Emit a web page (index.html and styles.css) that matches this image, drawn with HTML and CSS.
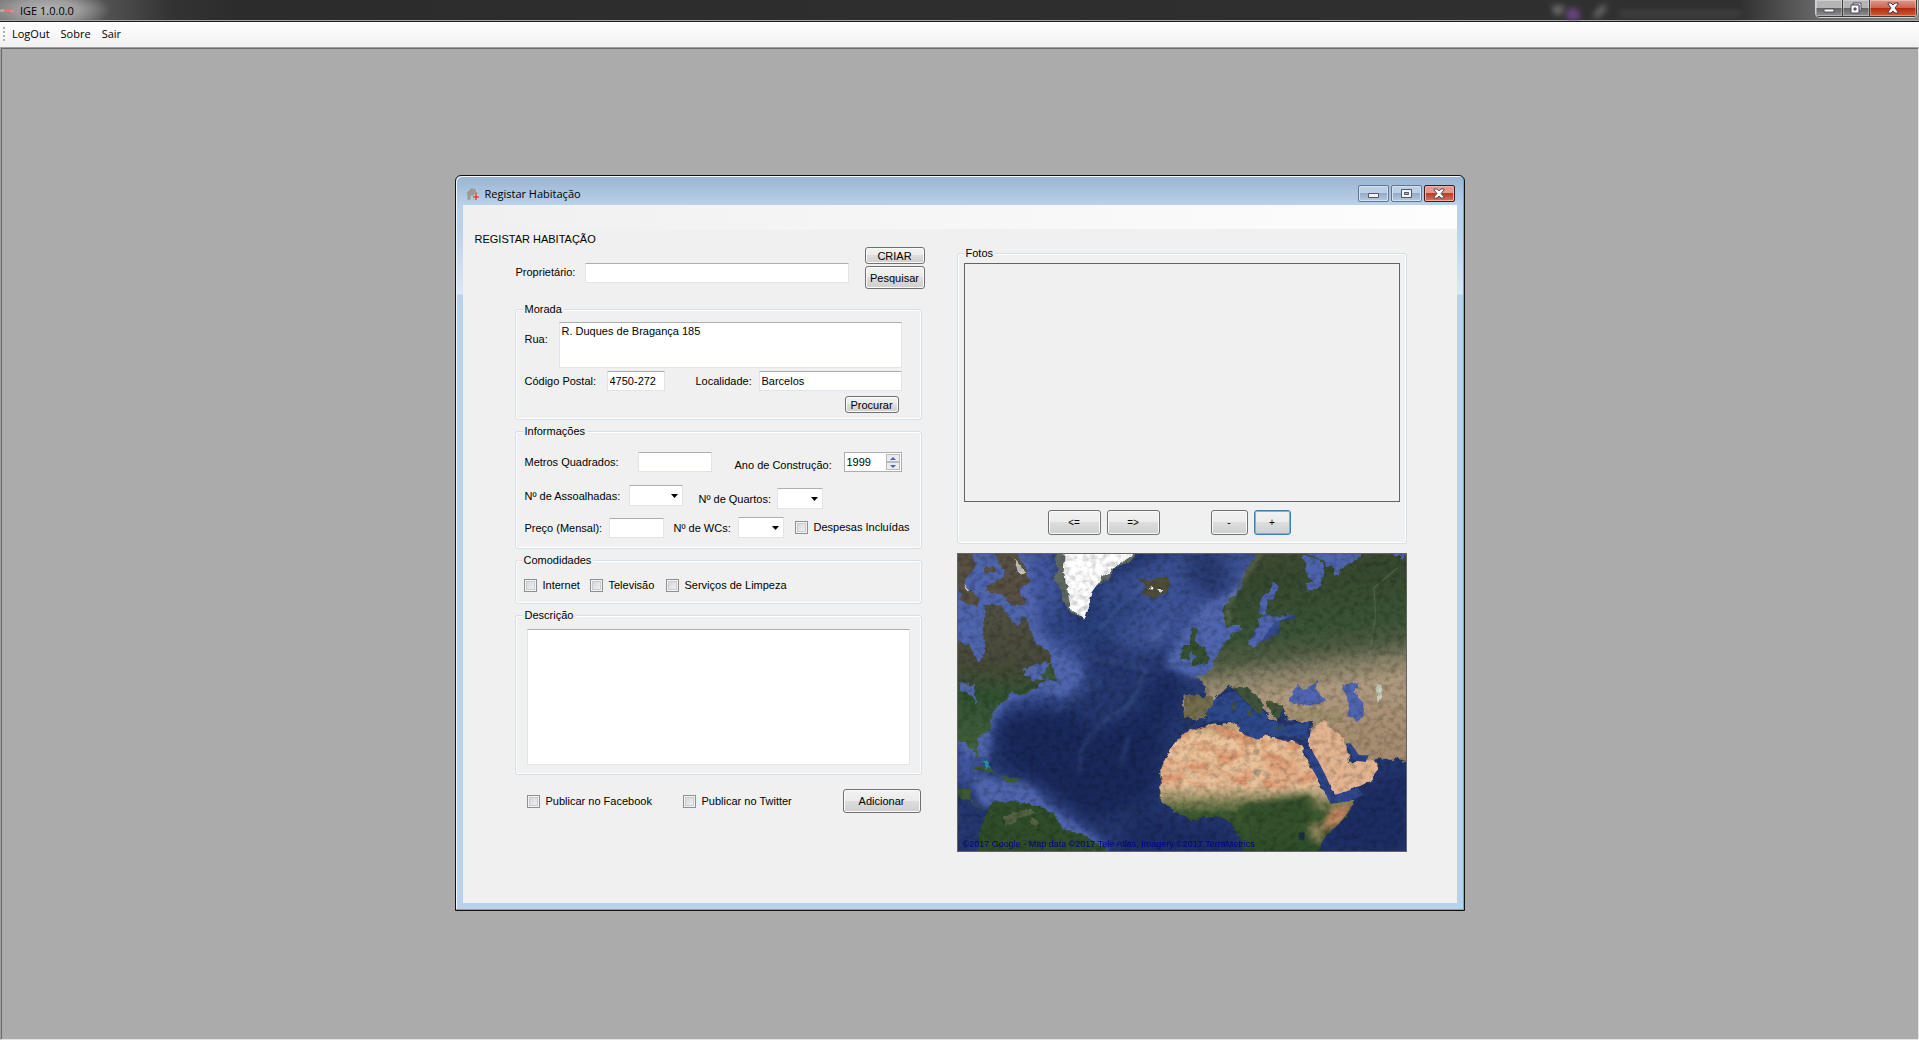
FILE: index.html
```html
<!DOCTYPE html>
<html lang="pt">
<head>
<meta charset="utf-8">
<title>IGE 1.0.0.0</title>
<link rel="stylesheet" href="styles.css">
</head>
<body>
<header class="app-title">
  <svg class="app-icon" width="15" height="6" viewBox="0 0 15 6" aria-hidden="true"><path d="M0 2l2-1h2v3H0z" fill="#aaa"/><path d="M4 1h6v3H4z" fill="#f07070"/><path d="M10 2h4v2h-4z" fill="#e88"/></svg>
  <h1 class="app-name">IGE 1.0.0.0</h1>
  <svg class="glass-marks" width="220" height="20" viewBox="0 0 220 20" aria-hidden="true"><path d="M0 6h14l-5 9H5z" fill="#888"/><circle cx="22" cy="15" r="7" fill="#7a4a9c"/><path d="M44 17l10-11" stroke="#888" stroke-width="5"/><path d="M68 14h122" stroke="#484848" stroke-width="6"/></svg>
  <div class="app-controls">
    <button class="app-btn" type="button" aria-label="Minimizar"><svg width="12" height="12" viewBox="0 0 12 12"><path d="M1 7h10v3H1z" fill="#fff" stroke="#4a4d5c"/></svg></button>
    <button class="app-btn" type="button" aria-label="Restaurar"><svg width="12" height="12" viewBox="0 0 12 12"><path d="M3 1h8v8H9V3H3z" fill="#fff" stroke="#4a4d5c"/><path d="M1 3h8v8H1z" fill="#fff" stroke="#4a4d5c"/><path d="M4 6h2v2H4z" fill="#777" stroke="#4a4d5c"/></svg></button>
    <button class="app-btn app-btn-close" type="button" aria-label="Fechar"><svg width="12" height="12" viewBox="0 0 12 12"><path d="M1 1h3l2 2 2-2h3v1L8 6l3 4v1H8L6 9l-2 2H1v-1l3-4-3-4z" fill="#fff" stroke="#58333a"/></svg></button>
  </div>
</header>
<nav class="menu">
  <span class="grip"></span>
  <a class="menu-item" href="#logout">LogOut</a>
  <a class="menu-item" href="#sobre">Sobre</a>
  <a class="menu-item" href="#sair">Sair</a>
</nav>
<main class="workspace">
  <section class="window" aria-labelledby="window-title">
    <header class="window-title">
      <svg width="15" height="15" viewBox="0 0 15 15" aria-hidden="true"><path d="M1 7l6-6 2 2V2h2v3l2 2v2h-1v5H8v-4H6v4H2V8z" fill="#9a9a9a" stroke="#c4ccd4" stroke-width=".6"/><path d="M11 8v6M8 11h6" stroke="#ddd" stroke-width="3"/><path d="M11 8v6M8 11h6" stroke="#e8383d" stroke-width="1.500"/></svg>
      <h2 class="window-name" id="window-title">Registar Habitação</h2>
      <div class="window-controls">
        <button class="win-btn" type="button" aria-label="Minimizar"><svg width="13" height="11" viewBox="0 0 13 11"><path d="M1.500 5.500h10v4h-10z" fill="#f4f4f4" stroke="#535666"/></svg></button>
        <button class="win-btn" type="button" aria-label="Maximizar"><svg width="13" height="11" viewBox="0 0 13 11"><path d="M1.500 1.500h10v8h-10z" fill="#f4f4f4" stroke="#535666"/><path d="M4.500 4.500h4v2h-4z" fill="#9ab4cc" stroke="#535666"/></svg></button>
        <button class="win-btn win-btn-close" type="button" aria-label="Fechar"><svg width="12" height="11" viewBox="0 0 12 11"><path d="M1 1h3l2 2 2-2h3v1L8 5.500 11 9v1H8L6 8l-2 2H1V9l3-3.500L1 2z" fill="#fff" stroke="#535666"/></svg></button>
      </div>
    </header>
    <div class="client">
      <div class="strip"></div>
      <h3 class="heading">REGISTAR HABITAÇÃO</h3>
      <form class="form">
        <div class="column">
          <div class="owner">
            <label class="owner-label" for="prop">Proprietário:</label>
            <input class="box owner-box" id="prop" type="text">
            <div class="owner-buttons">
              <button class="btn btn-low" type="button">CRIAR</button>
              <button class="btn btn-mid" type="button">Pesquisar</button>
            </div>
          </div>

          <fieldset class="group address">
            <legend>Morada</legend>
            <div class="row">
              <label class="w-rua" for="rua">Rua:</label>
              <textarea class="box rua" id="rua">R. Duques de Bragança 185</textarea>
            </div>
            <div class="row">
              <label class="w-cp" for="cp">Código Postal:</label>
              <input class="box cp" id="cp" type="text" value="4750-272">
              <label class="w-loc" for="loc">Localidade:</label>
              <input class="box grow" id="loc" type="text" value="Barcelos">
            </div>
            <button class="btn btn-low btn-find" type="button">Procurar</button>
          </fieldset>

          <fieldset class="group info">
            <legend>Informações</legend>
            <div class="row row-area">
              <label class="w-m2" for="m2">Metros Quadrados:</label>
              <input class="box m2" id="m2" type="text">
              <label class="w-ano low" for="ano">Ano de Construção:</label>
              <span class="spinner low">
                <input class="spinner-value" id="ano" type="number" value="1999">
                <span class="spinner-keys">
                  <button class="key" type="button" aria-label="Mais"><svg width="6" height="3" viewBox="0 0 6 3"><path d="M3 0l3 3H0z" fill="#4a63b5"/></svg></button>
                  <button class="key" type="button" aria-label="Menos"><svg width="6" height="3" viewBox="0 0 6 3"><path d="M0 0h6L3 3z" fill="#4a63b5"/></svg></button>
                </span>
              </span>
            </div>
            <div class="row row-rooms">
              <span class="pair high"><label class="w-ass" for="ass">Nº de Assoalhadas:</label><select class="box drop drop-wide" id="ass"><option></option></select></span>
              <span class="pair low"><label class="w-qua" for="qua">Nº de Quartos:</label><select class="box drop" id="qua"><option></option></select></span>
            </div>
            <div class="row row-price">
              <label class="w-pre" for="pre">Preço (Mensal):</label>
              <input class="box pre low" id="pre" type="text">
              <label class="w-wc" for="wc">Nº de WCs:</label>
              <select class="box drop" id="wc"><option></option></select>
              <label class="tick tick-costs"><input type="checkbox">Despesas Incluídas</label>
            </div>
          </fieldset>

          <fieldset class="group extras">
            <legend>Comodidades</legend>
            <div class="row">
              <label class="tick w-net"><input type="checkbox">Internet</label>
              <label class="tick w-tv"><input type="checkbox">Televisão</label>
              <label class="tick"><input type="checkbox">Serviços de Limpeza</label>
            </div>
          </fieldset>

          <fieldset class="group about">
            <legend>Descrição</legend>
            <textarea class="box description" aria-label="Descrição"></textarea>
          </fieldset>

          <div class="publish">
            <label class="tick w-fb"><input type="checkbox">Publicar no Facebook</label>
            <label class="tick"><input type="checkbox">Publicar no Twitter</label>
            <button class="btn btn-add" type="submit">Adicionar</button>
          </div>
        </div>

        <div class="column">
          <fieldset class="group photos">
            <legend>Fotos</legend>
            <div class="photo"></div>
            <div class="photo-buttons">
              <button class="btn btn-nav" type="button">&lt;=</button>
              <button class="btn btn-nav" type="button">=&gt;</button>
              <button class="btn btn-sign btn-remove" type="button">-</button>
              <button class="btn btn-sign btn-focus" type="button">+</button>
            </div>
          </fieldset>
          <figure class="map">
            <svg class="map-art" viewBox="24 28 1344 888" preserveAspectRatio="xMidYMid slice" role="img" aria-label="Mapa">
              <defs>
                <filter id="b30" x="-30%" y="-30%" width="160%" height="160%"><feGaussianBlur stdDeviation="26"/></filter>
                <filter id="b10" x="-30%" y="-30%" width="160%" height="160%"><feGaussianBlur stdDeviation="9"/></filter>
                <filter id="b3" x="-10%" y="-10%" width="120%" height="120%"><feGaussianBlur stdDeviation="7"/></filter>
                <filter id="rough" x="-5%" y="-5%" width="110%" height="110%"><feTurbulence type="fractalNoise" baseFrequency=".045" numOctaves="3" seed="4" result="n"/><feDisplacementMap in="SourceGraphic" in2="n" scale="20" xChannelSelector="R" yChannelSelector="G"/><feGaussianBlur stdDeviation="1.200"/></filter>
                <filter id="grain" x="0" y="0" width="100%" height="100%"><feTurbulence type="fractalNoise" baseFrequency=".05 .06" numOctaves="4" seed="9"/><feColorMatrix values="0 0 0 0 0  0 0 0 0 0  0 0 0 0 0  1.800 0 0 0 -.75"/></filter>
                <filter id="dust" x="0" y="0" width="100%" height="100%"><feTurbulence type="fractalNoise" baseFrequency=".015 .025" numOctaves="4" seed="21"/><feColorMatrix values="0 0 0 0 .84  0 0 0 0 .52  0 0 0 0 .36  0 3.600 0 0 -1.600"/></filter>
                <clipPath id="africa"><path id="africa-shape" d="M720 555C700 560 680 590 658 618C640 650 630 670 636 700C628 720 632 745 634 765C650 780 670 805 720 822C750 828 770 810 800 812C830 820 845 830 850 850L875 885L880 920H1105C1110 890 1125 870 1150 850C1180 820 1205 790 1212 766C1180 768 1145 775 1137 758C1120 740 1115 725 1100 700C1085 670 1070 640 1055 610L1040 592C1010 588 970 578 945 570C930 590 900 575 868 560L864 533C820 530 780 540 720 555Z"/></clipPath>
                <linearGradient id="africa-fill" x2="0" y2="1"><stop offset="0" stop-color="#b99e75"/><stop offset=".12" stop-color="#ecc39a"/><stop offset=".48" stop-color="#e8c09a"/><stop offset=".6" stop-color="#8d8a5e"/><stop offset=".7" stop-color="#3c5930"/><stop offset="1" stop-color="#2c4c27"/></linearGradient>
                <linearGradient id="asia-fill" gradientUnits="userSpaceOnUse" x1="700" y1="-30" x2="780" y2="620"><stop offset="0" stop-color="#4b4f39"/><stop offset=".25" stop-color="#37492f"/><stop offset=".5" stop-color="#3a5335"/><stop offset=".6" stop-color="#505c42"/><stop offset=".68" stop-color="#857f66"/><stop offset=".78" stop-color="#b09b80"/><stop offset="1" stop-color="#a58d70"/></linearGradient>
                <linearGradient id="america-fill" x2="0" y2="1"><stop offset="0" stop-color="#505044"/><stop offset=".4" stop-color="#474939"/><stop offset=".6" stop-color="#315230"/><stop offset="1" stop-color="#46633f"/></linearGradient>
              </defs>
              <path d="M0 0h1400v940H0z" fill="#24376f"/>
              <g filter="url(#b30)">
                <path d="M0 0H330L340 180L400 320L410 410L340 460L180 480L120 560L90 690L250 720L400 850L500 920L330 920L60 720L0 700Z" fill="#4257a0"/>
                <path d="M440 130L720 0H1250L1000 250L770 420L700 380L680 300L560 330L470 280Z" fill="#3d5296"/>
                <path d="M140 520L340 490L450 560L590 500L640 580L600 760L430 830L280 730L170 670Z" fill="#18285a"/>
                <path d="M700 380L600 420L560 560L620 560L690 470Z" fill="#192b60"/>
                <path d="M700 20L820 20L840 170L720 130Z" fill="#27396f"/>
                <path d="M270 170L370 240L430 210L540 130L590 170L480 280L310 290Z" fill="#2b427f"/>
                <path d="M1140 790L1380 660V920H1110ZM580 790L710 840L830 840L870 920H480Z" fill="#1c2d63"/>
              </g>
              <g filter="url(#b3)" opacity=".3" fill="none" stroke="#617bb9" stroke-width="9"><path d="M390 680Q380 560 540 480L590 370L420 335M300 510L460 400M450 250L590 110M540 570L510 660"/><path d="M600 270L650 240L620 300Z" fill="#6279bb"/></g>
              <g filter="url(#b10)" fill="#4f65ae"><path d="M0 20H240L260 150L265 250L310 300L395 370L400 400L345 460L270 430L170 470L130 530L115 640L60 640L0 560Z"/><path d="M640 360L680 290L760 180L860 130L900 280L790 400L720 395Z"/><path d="M70 690L240 720L290 780L440 880L480 920H370L240 790L90 780Z"/></g>

              <g filter="url(#rough)">
                <path d="M20 290L60 300L85 350L105 330L102 260L110 180L150 178L185 220L205 245L222 212L250 270L265 300L300 320V350L255 360L220 375L250 405L285 400L262 425L215 450L185 442L165 470L130 500L120 550L85 580L88 640L65 610L52 590L20 590Z" fill="url(#america-fill)"/>
                <path d="M300 350L290 375L270 395L325 412L315 375Z" fill="#3a5636"/>
                <path d="M20 25H75L78 60L60 90L45 120L90 165L80 185L35 165L20 100ZM140 25H205L235 80L240 110L210 130L225 180L190 185L155 145L110 140L115 118L150 110L170 75L145 60ZM110 65h25v20h-25z" fill="#575043"/>
                <path d="M195 40L225 75L235 90L205 85ZM45 120L55 140L60 135Z" fill="#c8c7bd"/>
                <path d="M30 410H55V440H30ZM55 425L80 420V475L68 450H55V470ZM225 372L280 355L250 400L225 395Z" fill="#5267aa"/>
                <path d="M320 25H565L545 50L500 65L470 105L430 130L420 170L405 222L370 208L345 175L340 145L318 110Z" fill="#5f6a62"/>
                <path d="M345 25H560L500 62L460 95L430 138L405 222L365 195L352 130L342 80Z" fill="#fff"/>
                <path d="M570 98L595 108L650 95L662 120L650 145L615 160L580 145L585 125Z" fill="#4d4d37"/><path d="M620 135l20-3-5 15zM595 132l14-6 2 10z" fill="#fff"/>
                <path d="M20 735L60 728L65 765L95 785L105 800L85 780L50 765L20 745ZM60 660L110 665L140 685L100 680ZM150 695L185 692L220 706L180 712Z" fill="#3d5930"/>
                <path d="M110 810L130 772L185 765L250 778L310 800L340 850L400 865L480 920H85L90 870Z" fill="#2f4d29"/><path d="M160 815l80-30 20 20-45 10-50 30zM240 820l30 10-15 18z" fill="#556442"/>
                <path d="M95 640L115 650L130 672L108 670Z" fill="#248fa8"/>
              </g>

              <path d="M820 300L850 258L890 255L900 285L940 292L985 270L990 230L1030 222V210L960 220L940 205L900 290L875 275L870 240L830 245L815 200L830 170L870 135L885 80L925 20L1375 20V650L1340 640H1240L1210 630L1190 595L1195 650L1235 645L1260 630L1285 660L1270 700L1220 725L1150 750L1110 665L1085 605L1080 585L1085 530L1010 525L1000 490L975 480L960 490L985 530L960 520L930 480L895 435L915 500L870 440L835 420L800 455L770 500L745 530L705 515L700 450L770 460L760 410L735 395L780 375Z" fill="url(#asia-fill)" filter="url(#rough)"/>
              <path d="M1068 580L1110 525L1180 580L1195 650L1235 645L1270 645L1285 665L1265 705L1220 725L1150 750L1125 700Z" fill="#e3b490" filter="url(#rough)"/>
              <g fill="#4f65b0" filter="url(#rough)">
                <path d="M965 115L985 125L970 155L955 165L945 210L925 205L925 175L940 155L960 140ZM930 215L1020 215L970 235L945 270L915 310L885 300L915 275ZM1058 30L1090 35L1120 60V95L1105 125L1075 140L1065 115L1090 110L1072 90ZM1145 45L1170 55L1165 95L1150 90ZM1040 15L1240 15L1230 35L1180 70L1130 65L1100 35ZM1310 15L1375 15L1355 45Z"/>
                <path d="M1030 430L1045 420L1065 435L1100 405L1095 435L1130 465L1100 480L1040 480L1018 468ZM1175 420L1225 412L1215 440L1235 470L1240 515L1220 530L1195 515L1190 465Z"/>
              </g>
              <path d="M780 470L850 435L875 460L910 500L930 485L955 520L1000 540L1078 530L1070 585L990 570L945 590L870 570L865 530L800 525L765 530Z" fill="#2d498c" filter="url(#rough)"/>
              <g fill="#40543a" filter="url(#rough)"><path d="M850 428L895 430L945 480L925 510L880 460ZM885 500l25-3-5 17zM845 470l12 2v30l-12-5zM945 465L1000 480L985 525L960 500ZM970 545h35v6h-35z"/></g>
              <path d="M1005 500L1085 485L1170 500L1175 530L1085 530L1020 525Z" fill="#a1906f" filter="url(#rough)"/>
              <path d="M705 450L790 455L775 500L740 528L705 518Z" fill="#746d4c" filter="url(#rough)"/>
              <path d="M720 250L745 250L735 285L760 310L780 350L745 360L720 362L735 335L720 310ZM700 300L725 300L715 345L690 345Z" fill="#364f31" filter="url(#rough)"/>
              <path d="M840 240L830 185L895 75L930 30" fill="none" stroke="#b2b09a" stroke-width="9" opacity=".35" filter="url(#b3)"/>
              <path d="M820 420L900 400M925 380L980 380L1000 415" fill="none" stroke="#899175" stroke-width="6" opacity=".35" filter="url(#rough)"/>
              <g filter="url(#rough)"><use href="#africa-shape" fill="url(#africa-fill)"/></g>
              <g clip-path="url(#africa)"><path d="M630 545h480v180H630z" filter="url(#dust)" opacity=".7"/><g filter="url(#b10)"><path d="M950 650L1040 620L1060 700L970 740Z" fill="#e0a07a" opacity=".6"/><path d="M1140 790L1210 770L1180 830L1110 860Z" fill="#c98a65"/><path d="M1070 840L1110 830L1120 890H1090Z" fill="#8f855d"/><path d="M860 780L1080 745L1090 830L970 855L880 820Z" fill="#34502b"/></g><path d="M910 610l18 4-4 15-16-4zM910 670l25 5-10 20-15-8z" fill="#b59b80"/><path d="M1045 862l18-2-2 25-16-5z" fill="#1c2c44"/></g>
              <path d="M1058 612L1082 612L1110 660L1130 700L1150 750L1135 762L1110 715L1080 660ZM1185 595L1200 594L1225 630L1255 630L1245 650L1210 645Z" fill="#2d468b"/>
              <path d="M1130 755L1220 728L1240 750L1190 768L1140 775Z" fill="#31478e"/>
              <path d="M1275 415l18 5v40l-12 10z" fill="#cbd3c5" filter="url(#rough)"/><path d="M1255 340L1275 210L1270 130L1340 70" fill="none" stroke="#6c7d61" stroke-width="4" opacity=".4"/>
              <path d="M24 28h1344v888H24z" filter="url(#grain)" opacity=".28"/>
            </svg>
            <figcaption class="map-credit">©2017 Google - Map data ©2017 Tele Atlas, Imagery ©2017 TerraMetrics</figcaption>
          </figure>
        </div>
      </form>
    </div>
  </section>
</main>
</body>
</html>
```
FILE: styles.css
```css
* { box-sizing: border-box; }

body {
  margin: 0;
  min-height: 100vh;
  display: flex;
  flex-direction: column;
  background: #ababab;
  color: #000;
  font: 11px/14px "Liberation Sans", Arial, sans-serif;
}

h1, h2, h3, figure { margin: 0; font-weight: normal; }
button, input, select, textarea { font: inherit; color: inherit; }
svg { display: block; }

/* Application frame */
.app-title {
  display: flex;
  align-items: flex-start;
  height: 22px;
  overflow: hidden;
  border-bottom: 1px solid #1c1c1c;
  box-shadow: inset 0 -1px #a8a8a8;
  background:
    radial-gradient(ellipse 62px 20px at 48px 10px, #b4b4b4 0, #9c9c9c 50%, transparent 100%),
    linear-gradient(90deg, #777 0, #5a5a5a 90px, #333 170px, #2c2c2c 240px, #303030 1740px, #666 1815px, #888 100%);
}
.app-icon { margin: 8px 5px 0 0; }
.app-name { font: 11px/21px "Open Sans", "Noto Sans", sans-serif; }
.glass-marks { margin-left: auto; filter: blur(3px); opacity: .8; }
.app-controls {
  display: flex;
  margin: 0 1px 0 44px;
  border: 1px solid #d0d0d0;
  border-top: 0;
  border-radius: 0 0 5px 5px;
  overflow: hidden;
}
.app-btn {
  display: flex;
  align-items: center;
  justify-content: center;
  width: 27px;
  height: 17px;
  padding: 0;
  border: 1px solid #3a3a3a;
  border-width: 0 1px 1px 0;
  box-shadow: inset 0 0 0 1px #ffffff55;
  background: linear-gradient(#b4b4b4 50%, #626266 50%, #8f8f8f);
}
.app-btn-close {
  width: 47px;
  background: linear-gradient(#dc9a8c, #cc6350 50%, #b02a10 50%, #d45a30);
}

.menu {
  display: flex;
  align-items: center;
  gap: 11px;
  height: 25px;
  padding: 0 3px 2px;
  background: linear-gradient(#fff, #f0f0f0);
  font: 11px/16px "Open Sans", "Noto Sans", sans-serif;
}
.grip {
  width: 2px;
  height: 14px;
  margin-right: -4px;
  background: repeating-linear-gradient(#b0b0b0 0 2px, transparent 2px 4px);
}
.menu-item { color: #000; text-decoration: none; }

.workspace {
  flex: 1;
  display: flex;
  align-items: center;
  justify-content: center;
  padding-bottom: 1px;
  border: 1px solid #e3e3e3;
  border-top-color: #a0a0a0;
  border-left-color: #a0a0a0;
  box-shadow: inset 1px 1px #696969;
}

/* Child window */
.window {
  width: 1010px;
  max-width: 100%;
  padding: 0 7px 7px;
  border: 1px solid #111;
  border-radius: 6px 6px 0 0;
  box-shadow: inset -1px -1px #35c0dc, inset 1px 1px #f4f8fc;
  background: linear-gradient(#99b4d1, #b9d1ea 29px, #b9d1ea 50px, #dbe7f5 118px, #b9d1ea 119px);
}
.window-title {
  display: flex;
  align-items: center;
  gap: 5px;
  height: 29px;
  padding: 6px 2px 0;
}
.window-name { font: 11px/16px "Open Sans", "Noto Sans", sans-serif; }
.window-controls { display: flex; gap: 2px; margin-left: auto; }
.win-btn {
  display: flex;
  align-items: center;
  justify-content: center;
  width: 31px;
  height: 17px;
  padding: 0;
  border: 1px solid #5f7590;
  border-radius: 2px;
  box-shadow: inset 0 0 0 1px #d5e3f0;
  background: linear-gradient(#bdd1e6 50%, #93adc9 50%, #b4cce4);
}
.win-btn-close {
  border-color: #4a1521;
  box-shadow: inset 0 0 0 1px #e9b5ab;
  background: linear-gradient(#e39a8c 50%, #b83f24 50%, #d07560);
}
.client { background: #f0f0f0; }
.strip { height: 24px; background: linear-gradient(90deg, #f0f0f0, #fdfdfd); }
.heading { padding: 3px 12px 0; font-size: 11px; line-height: 15px; }

/* Form */
.form {
  display: grid;
  grid-template-columns: 407fr 450fr;
  gap: 35px;
  padding: 0 50px 51px 52px;
}
.column { display: flex; flex-direction: column; gap: 5px; min-width: 0; }
label { white-space: nowrap; }

.box {
  min-width: 0;
  height: 20px;
  padding: 0 2px;
  border: 1px solid #e2e3ea;
  border-top-color: #abadb3;
  border-radius: 1px;
  background-color: #fff;
  outline: 0;
  resize: none;
}
.drop {
  width: 46px;
  height: 21px;
  appearance: none;
  background-image: url("data:image/svg+xml,%3Csvg xmlns='http://www.w3.org/2000/svg' width='7' height='4'%3E%3Cpath d='M0 0h7L3.500 4z'/%3E%3C/svg%3E");
  background-repeat: no-repeat;
  background-position: right 4px center;
}
.drop-wide { width: 54px; }

.btn {
  padding: 0;
  border: 1px solid #707070;
  border-radius: 3px;
  box-shadow: inset 0 0 0 1px #fbfbfb;
  background: linear-gradient(#f2f2f2, #ebebeb 50%, #dddddd 50%, #cfcfcf);
  white-space: nowrap;
}
.btn-low { height: 17px; padding-top: 1px; line-height: 14px; }
.btn-mid { height: 23px; }
.btn-find { width: 54px; margin: 2px 3px 0 auto; }
.btn-add { width: 78px; height: 24px; margin-left: auto; }
.btn-nav, .btn-sign { height: 25px; font-size: 10px; }
.btn-nav { width: 53px; }
.btn-sign { width: 37px; }
.btn-remove { margin-left: 45px; }
.btn-focus { border-color: #3c7fb1; box-shadow: inset 0 0 0 1px #46c8f2; }

.owner { display: flex; align-items: flex-end; margin: 0 -3px 9px 0; }
.owner-label { width: 70px; padding-left: 1px; margin-bottom: 10px; }
.owner-box { flex: 1; margin: 0 16px 6px 0; }
.owner-buttons { display: flex; flex-direction: column; gap: 2px; width: 60px; }

.group {
  display: flex;
  flex-direction: column;
  min-width: 0;
  margin: 0;
  border: 1px solid #d5dfe5;
  border-radius: 3px;
  box-shadow: inset 0 0 0 1px #fff;
}
.group > legend {
  margin-left: -2px;
  padding: 0 2px;
  background: #f0f0f0;
  line-height: 13px;
}
.row { display: flex; align-items: center; }
.grow { flex: 1; }
.low { align-self: flex-end; }
.high { align-self: flex-start; }
.pair { display: flex; align-items: center; }

.address { gap: 3px; padding: 6px 19px 6px 9px; }
.rua { flex: 1; height: 46px; padding-top: 1px; }
.w-rua { width: 34px; margin-bottom: 12px; }
.w-cp { width: 82px; }
.cp { width: 58px; margin-right: 31px; }
.w-loc { width: 63px; }

.info { padding: 13px 9px 10px; }
.row-area { height: 21px; }
.w-m2 { width: 113px; }
.m2 { width: 74px; margin-right: 23px; }
.w-ano { width: 109px; }
.spinner {
  display: flex;
  width: 58px;
  height: 20px;
  padding: 1px;
  border: 1px solid #abadb3;
  background: #fff;
}
.spinner-value {
  flex: 1;
  min-width: 0;
  padding: 0 1px;
  border: 0;
  background: none;
  outline: 0;
  appearance: textfield;
}
.spinner-value::-webkit-inner-spin-button { appearance: none; margin: 0; }
.spinner-keys { display: flex; flex-direction: column; width: 14px; }
.key {
  flex: 1;
  display: flex;
  align-items: center;
  justify-content: center;
  padding: 0;
  border: 1px solid #b8bac0;
  background: #ececef;
}
.row-rooms { height: 24px; gap: 16px; margin: 13px 0 8px; }
.w-ass { width: 104px; }
.w-qua { width: 78px; }
.row-price { height: 21px; }
.w-pre { width: 84px; }
.pre { width: 55px; margin-right: 10px; }
.w-wc { width: 64px; }
.tick-costs { margin-left: 11px; }

.tick { display: flex; align-items: center; gap: 6px; line-height: 15px; }
.tick input {
  width: 13px;
  height: 13px;
  margin: 0;
  appearance: none;
  border: 1px solid #8e8f8f;
  box-shadow: inset 0 0 0 1px #f4f4f4, inset 0 0 0 2px #c8ccd0;
  background: linear-gradient(135deg, #cdd1d8, #f6f6f6);
}
.extras { padding: 11px 8px 10px; }
.w-net { width: 66px; }
.w-tv { width: 76px; }

.about { padding: 7px 11px 9px; }
.about > legend { margin-left: -4px; }
.description { height: 136px; }
.publish { display: flex; align-items: center; margin-top: 9px; padding: 0 1px 0 12px; }
.w-fb { width: 156px; }

.photos { padding: 3px 6px 8px; }
.photos > legend { margin-left: 0; }
.photo { height: 239px; border: 1px solid #646464; }
.photo-buttons { display: flex; gap: 6px; margin: 8px 0 0 84px; }

.map {
  position: relative;
  margin-top: 4px;
  border: 1px solid #646464;
}
.map-art { width: 100%; aspect-ratio: 448 / 297; }
.map-art filter { color-interpolation-filters: sRGB; }
.map-credit {
  position: absolute;
  left: 5px;
  bottom: 0;
  color: #00008b;
  white-space: nowrap;
  font-size: 9px;
}
```
